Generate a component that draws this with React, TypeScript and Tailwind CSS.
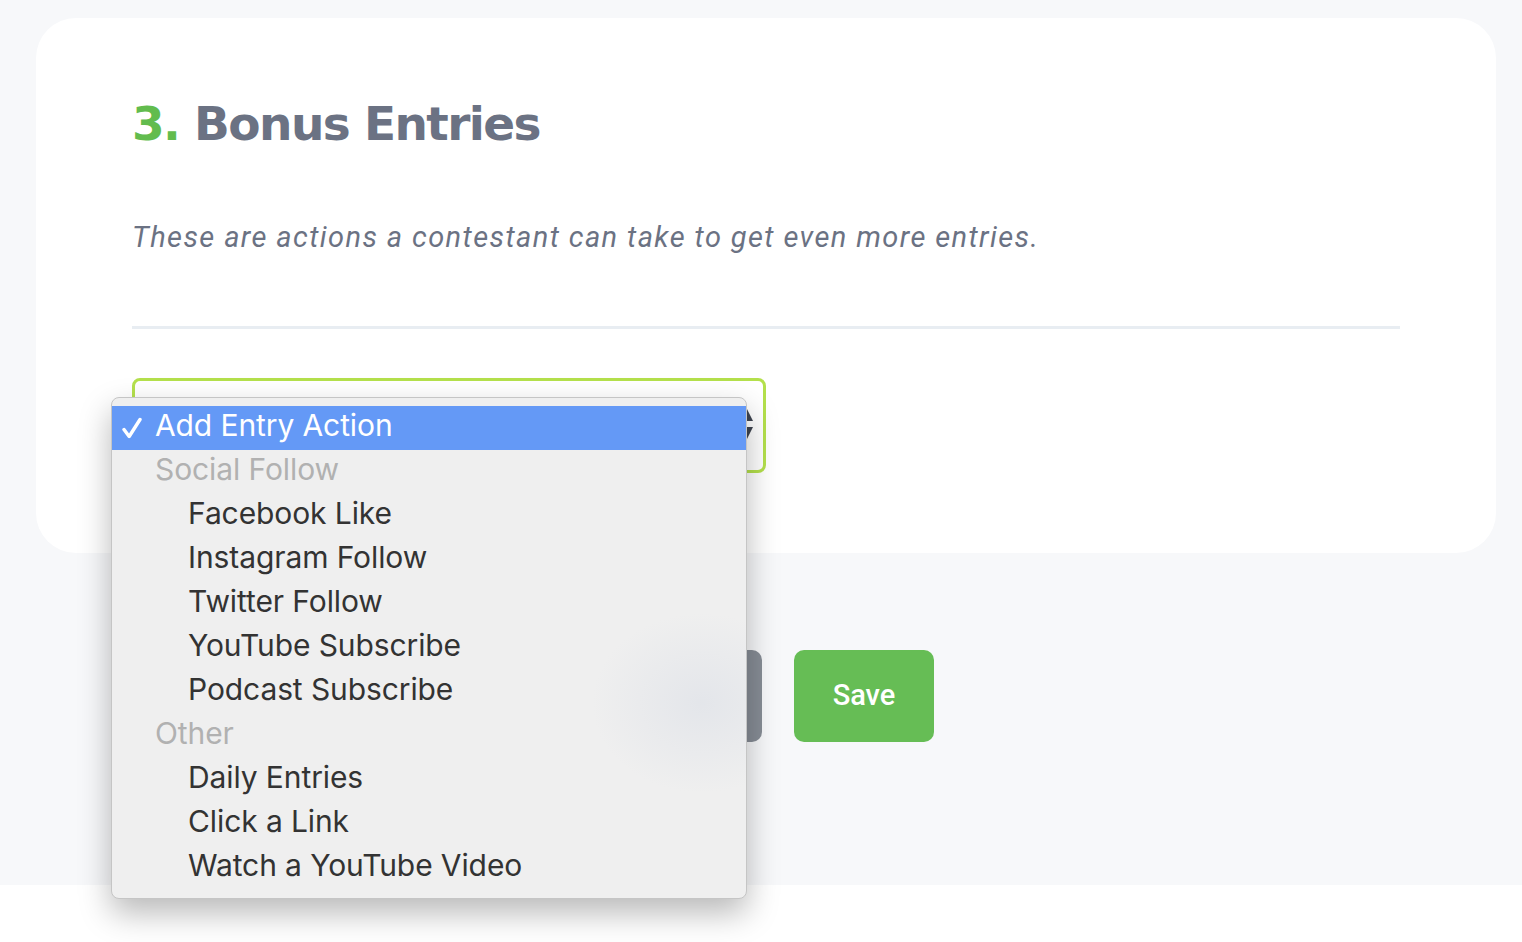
import React from "react";

const groups = [
  { label: "Social Follow", items: ["Facebook Like", "Instagram Follow", "Twitter Follow", "YouTube Subscribe", "Podcast Subscribe"] },
  { label: "Other", items: ["Daily Entries", "Click a Link", "Watch a YouTube Video"] },
];

export default function App() {
  return (
    <div className="relative min-h-[942px] bg-white">
      <div className="h-[885px] bg-[#f7f8fa] pt-[18px] pl-[36px] pr-[26px]">
        <div className="h-[535px] rounded-[40px] bg-white pl-[96px] pr-[96px] pt-[78px]">
          <h1 className="text-[47px] leading-[56px] font-bold text-[#6b7283]" style={{ fontFamily: '"DejaVu Sans", sans-serif', letterSpacing: "-1.6px" }}>
            <span className="text-[#62bc4e]">3.</span> Bonus Entries
          </h1>
          <p className="mt-[65px] text-[29px] leading-[40px] italic text-[#6b7283]" style={{ fontFamily: "Roboto, sans-serif", letterSpacing: "1.4px" }}>
            These are actions a contestant can take to get even more entries.
          </p>
          <div className="mt-[69px] h-[3px] bg-[#e8edf2]" />
          <div className="mt-[49px] w-[634px] h-[95px] rounded-[8px] border-[3px] border-[#b4e04c] bg-white relative">
            <svg className="absolute right-[10px] top-[26px]" width="12" height="34" viewBox="0 0 12 34">
              <path d="M6 2 L12 14 L0 14 Z" fill="#3f4550" />
              <path d="M0 20 L12 20 L6 32 Z" fill="#3f4550" />
            </svg>
          </div>
        </div>
        <div className="mt-[97px] pl-[566px] flex gap-[32px]">
          <div className="w-[160px] h-[92px] rounded-[10px] bg-[#878d96]" />
          <button className="w-[140px] h-[92px] rounded-[10px] bg-[#66bd55] text-white text-[29px] font-medium" style={{ fontFamily: "Roboto, sans-serif" }}>
            Save
          </button>
        </div>
      </div>

      <div
        className="absolute left-[111px] top-[397px] w-[636px] h-[502px] rounded-[8px] bg-[#efefef] border border-[#c5c5c5] pt-[8px] shadow-[0_14px_32px_rgba(0,0,0,0.28)] overflow-hidden"
        style={{ fontFamily: "Inter, sans-serif" }}
      >
        <div
          className="absolute left-[480px] top-[215px] w-[220px] h-[180px] rounded-full"
          style={{ background: "radial-gradient(closest-side, rgba(218,222,230,0.55), rgba(218,222,230,0))" }}
        />
        <div className="relative h-[44px] bg-[#6499f6] text-white flex items-center pb-[5px] text-[30px] tracking-[-0.1px]">
          <span className="w-[43px] pl-[10px] pt-[5px] flex">
            <svg width="20" height="22" viewBox="0 0 20 22">
              <path d="M2 12.5 L7.2 19.5 L18 2.5" fill="none" stroke="#ffffff" strokeWidth="3.4" strokeLinecap="round" strokeLinejoin="round" />
            </svg>
          </span>
          <span>Add Entry Action</span>
        </div>
        {groups.map((g) => (
          <div key={g.label} className="relative">
            <div className="h-[44px] flex items-center pb-[5px] pl-[43px] text-[30px] tracking-[-0.1px] text-[#b1b1b1]">{g.label}</div>
            {g.items.map((it) => (
              <div key={it} className="h-[44px] flex items-center pb-[5px] pl-[76px] text-[30px] tracking-[-0.1px] text-[#333333]">
                {it}
              </div>
            ))}
          </div>
        ))}
      </div>
    </div>
  );
}
